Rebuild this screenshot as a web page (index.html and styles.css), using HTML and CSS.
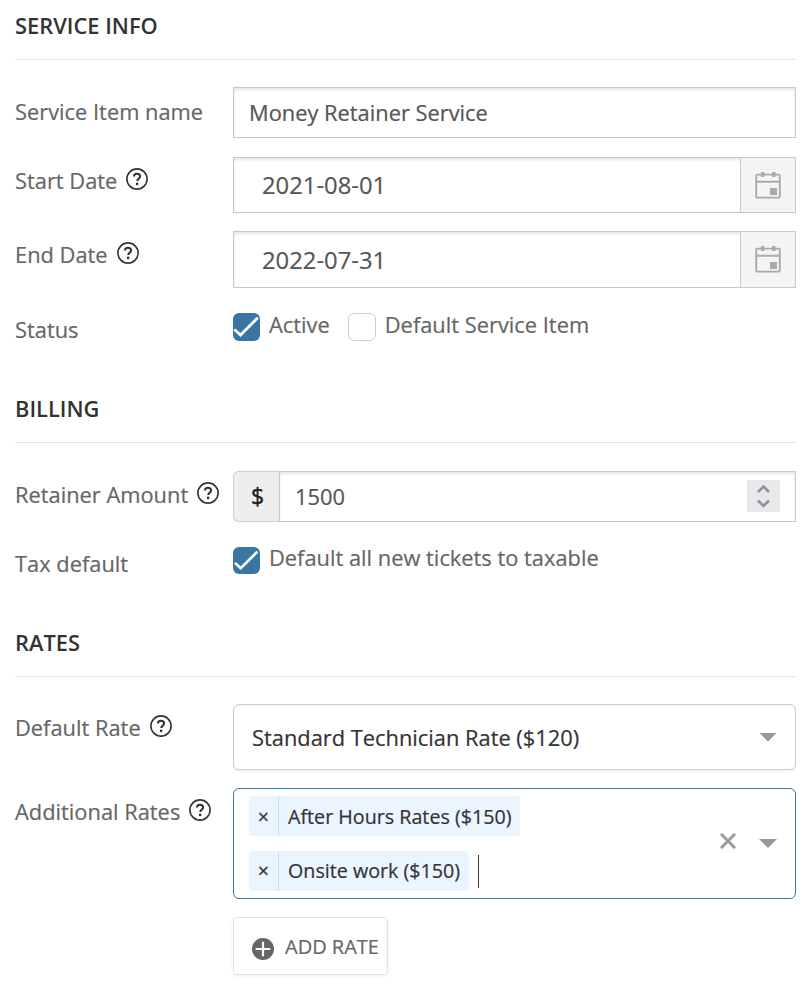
FILE: index.html
```
<!DOCTYPE html>
<html lang="en">
<head>
<meta charset="utf-8">
<title>Service Item</title>
<link rel="stylesheet" href="styles.css">
</head>
<body>
<svg class="defs" width="0" height="0">
  <symbol id="help" viewBox="0 0 24 24"><circle cx="12" cy="12" r="10.1" fill="none" stroke="currentColor" stroke-width="1.6"/><path d="M8.9 9.5c0-1.7 1.4-2.8 3.1-2.8s3.1 1.1 3.1 2.7c0 2.1-2.7 2.3-2.9 4.6" fill="none" stroke="currentColor" stroke-width="2"/><circle cx="12.1" cy="16.9" r="1.3" fill="currentColor"/></symbol>
  <symbol id="calendar" viewBox="0 0 26 28"><path d="M2.2 3.6h21.6q1 0 1 1v21q0 1-1 1H2.2q-1 0-1-1v-21q0-1 1-1zM1.2 10.8h23.6" fill="none" stroke="currentColor" stroke-width="1.9"/><path d="M6 1h3.4v5H6zM17 1h3.4v5H17zM15 17h7v7h-7z" fill="currentColor"/></symbol>
  <symbol id="check" viewBox="0 0 27 28"><path d="M2.3 17.2l5.2 4.8L24 5.6" fill="none" stroke="#fff" stroke-width="2.8" stroke-linecap="round"/></symbol>
</svg>
<main class="form">
  <section>
    <h2>SERVICE INFO</h2>
    <div class="row row-name"><label>Service Item name</label><div class="input">Money Retainer Service</div></div>
    <div class="row row-start"><label>Start Date <svg class="help"><use href="#help"/></svg></label>
      <div class="input date"><span>2021-08-01</span><i class="addon"><svg class="calendar"><use href="#calendar"/></svg></i></div></div>
    <div class="row row-end"><label>End Date <svg class="help"><use href="#help"/></svg></label>
      <div class="input date"><span>2022-07-31</span><i class="addon"><svg class="calendar"><use href="#calendar"/></svg></i></div></div>
    <div class="row row-status"><label>Status</label>
      <div class="checks"><span class="box on"><svg><use href="#check"/></svg></span><span class="check-text active">Active</span><span class="box"></span><span class="check-text">Default Service Item</span></div></div>
  </section>
  <section>
    <h2>BILLING</h2>
    <div class="row row-amount"><label>Retainer Amount <svg class="help"><use href="#help"/></svg></label>
      <div class="amount"><span class="currency">$</span><div class="input"><span class="number">1500</span><span class="spinner"><svg viewBox="0 0 33 32"><path d="M11 12l5.5-5.5L22 12M11 20.5l5.5 5.5 5.5-5.5" fill="none" stroke="#91919d" stroke-width="2.6"/></svg></span></div></div></div>
    <div class="row row-tax"><label>Tax default</label>
      <div class="checks"><span class="box on"><svg><use href="#check"/></svg></span><span class="check-text">Default all new tickets to taxable</span></div></div>
  </section>
  <section>
    <h2>RATES</h2>
    <div class="row row-rate"><label>Default Rate <svg class="help"><use href="#help"/></svg></label>
      <div class="select"><span>Standard Technician Rate ($120)</span><i class="arrow"></i></div></div>
    <div class="row row-rates"><label>Additional Rates <svg class="help"><use href="#help"/></svg></label>
      <div class="multi">
        <div class="tags">
          <div class="tag first"><b>×</b><span>After Hours Rates ($150)</span></div>
          <div class="tagline"><div class="tag second"><b>×</b><span>Onsite work ($150)</span></div><i class="caret"></i></div>
        </div>
        <svg class="clear" viewBox="0 0 16 16"><path d="M1.8 1.8l12.4 12.4M14.2 1.8L1.8 14.2" stroke="#999" stroke-width="2.9" stroke-linecap="round"/></svg>
        <i class="arrow"></i>
      </div></div>
    <button class="add"><svg viewBox="0 0 22 22"><circle cx="11" cy="11" r="11" fill="#666"/><path d="M11 4.5v13M4.5 11h13" stroke="#fff" stroke-width="2.2" stroke-linecap="round"/></svg><span>ADD RATE</span></button>
  </section>
</main>
</body>
</html>
```
FILE: styles.css
```
* { box-sizing: border-box; }
body { margin: 0; background: #fff; color: #666; font: 21.85px/30px "Open Sans", sans-serif; -webkit-text-stroke: 0.2px currentColor; overflow: hidden; }
.defs { display: block; }
.form { padding: 0 12px 0 15px; height: 990px; }
section { height: 383px; }
section + section { height: 234px; }
h2 { margin: 0; height: 60px; padding-top: 11px; border-bottom: 1px solid #e3e3e3; color: #333; font-size: 21.85px; font-weight: 600; -webkit-text-stroke: 0; }
.row { display: grid; grid-template-columns: 218px 1fr; align-items: start; }
label { display: flex; align-items: flex-start; white-space: nowrap; }
.help { width: 24px; height: 24px; margin: 1px 0 0 8px; color: #333; flex: none; }
.row-name { margin-top: 27px; height: 70px; }
.row-name label { padding-top: 10px; }
.row-start { height: 74px; }
.row-start label { padding-top: 9px; }
.row-end { height: 82px; }
.row-end label { padding-top: 9px; }
.row-status label { padding-top: 2px; }
.input { height: 51px; border: 1px solid #c8c8c8; padding: 0 0 0 15px; display: flex; align-items: center; color: #555; box-shadow: inset 0 2px 3px #0000001a; white-space: nowrap; }
.date { height: 56px; padding: 0 0 0 28px; font-size: 23.8px; justify-content: space-between; }
.row-end .date { height: 57px; }
.addon { width: 55px; height: 100%; background: #f4f4f4; border-left: 1px solid #c8c8c8; display: grid; place-items: center; }
.calendar { width: 26px; height: 28px; color: #aaa; }
.row-end .calendar { margin-top: -1px; }
.checks { display: flex; align-items: flex-start; white-space: nowrap; }
.box { width: 28px; height: 28px; border: 1px solid #ccc; border-radius: 6px; flex: none; }
.box.on { width: 27px; border: 0; background: #3a76a3; }
.box svg { display: block; width: 27px; height: 28px; }
.check-text { margin: -3px 0 0 9px; }
.active { margin-right: 18px; }
.row-amount { margin-top: 28px; height: 76px; }
.row-amount label { padding-top: 9px; }
.amount { display: flex; }
.currency { width: 46px; height: 51px; background: #eee; border: 1px solid #ccc; border-right: 0; border-radius: 6px 0 0 6px; display: grid; place-items: center; color: #222; padding: 0 0 2px 2px; font-size: 23px; -webkit-text-stroke-width: 0.4px; }
.amount .input { flex: 1; justify-content: space-between; padding-right: 15px; }
.spinner { width: 33px; height: 32px; margin-bottom: 2px; background: #e8e8ea; }
.spinner svg { display: block; }
.row-tax label { padding-top: 2px; }
.row-tax .box.on, .row-tax .box svg { height: 27px; }
.row-tax .check-text { margin-top: -4px; }
.row-rate { margin-top: 27px; height: 84px; }
.row-rate label { padding-top: 9px; }
.select { height: 66px; border: 1px solid #ccc; border-radius: 6px; box-shadow: 0 2px 1px #0000000d, inset 0 1px 2px #0000000d; display: flex; align-items: center; justify-content: space-between; padding: 0 18px; color: #333; white-space: nowrap; }
.select span { padding-top: 2px; }
.arrow { width: 18px; height: 9px; background: #999; clip-path: polygon(0 0, 100% 0, 50% 100%); flex: none; }
.row-rates { height: 129px; }
.row-rates label { padding-top: 9px; }
.multi { height: 111px; border: 1px solid #3a76a3; border-radius: 6px; display: flex; align-items: center; padding: 0 18px 0 15px; color: #333; font-size: 19.7px; }
.tags { display: flex; flex-direction: column; gap: 15px; flex: 1; align-items: flex-start; }
.tagline { display: flex; align-items: center; }
.tag { width: 271px; height: 40px; border-radius: 4px; background: #ebf5ff; display: flex; align-items: center; white-space: nowrap; }
.second { width: 220px; }
.tag b { width: 30px; height: 40px; border-right: 1px solid #c2e0ff; font-weight: 400; text-align: center; line-height: 40px; }
.tag span { margin-left: 9px; }
.first span { padding-top: 2px; }
.first b { line-height: 42px; }
.caret { width: 1px; height: 33px; background: #333; margin-left: 9px; }
.clear { width: 16px; height: 16px; margin: -5px 23px 0 0; }
.add { display: flex; align-items: center; width: 155px; height: 58px; margin: 0 0 0 218px; padding: 0 0 0 18px; border: 1px solid #e2e2e2; border-radius: 4px; background: #fff; box-shadow: 0 1px 4px #00000010; color: #666; font: 20px/30px "Open Sans", sans-serif; white-space: nowrap; }
.add svg { width: 22px; height: 22px; margin-top: 6px; }
.add span { margin-left: 11px; padding-top: 1px; }
```
